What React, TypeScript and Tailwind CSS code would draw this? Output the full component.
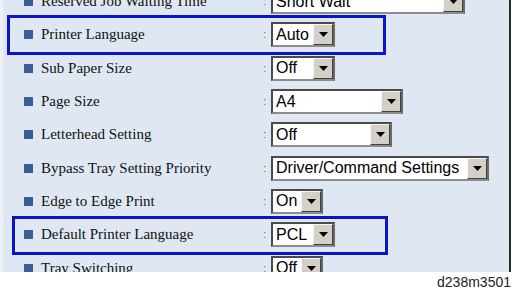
const rows = [
  { label: "Reserved Job Waiting Time", value: "Short Wait", width: 194 },
  { label: "Printer Language", value: "Auto", width: 64 },
  { label: "Sub Paper Size", value: "Off", width: 64 },
  { label: "Page Size", value: "A4", width: 132 },
  { label: "Letterhead Setting", value: "Off", width: 121 },
  { label: "Bypass Tray Setting Priority", value: "Driver/Command Settings", width: 218 },
  { label: "Edge to Edge Print", value: "On", width: 52 },
  { label: "Default Printer Language", value: "PCL", width: 64 },
  { label: "Tray Switching", value: "Off", width: 52 },
];

function Select({ value, width }: { value: string; width: number }) {
  return (
    <div
      className="flex h-[25px] items-center border-2 border-t-[#4a4a4a] border-l-[#4a4a4a] border-b-[#8c8c8c] border-r-[#6a6a6a] bg-white"
      style={{ width }}
    >
      <span className="flex-1 truncate pl-[3px] font-['Liberation_Sans',Arial,sans-serif] text-[16px] leading-none text-black">
        {value}
      </span>
      <span className="flex h-[21px] w-[20px] items-center justify-center border border-t-[#f4f4f4] border-l-[#f4f4f4] border-b-[#404040] border-r-[#404040] bg-[#d4d0c8]">
        <svg width="9" height="5" viewBox="0 0 9 5">
          <path d="M0 0h9L4.5 5z" fill="#000" />
        </svg>
      </span>
    </div>
  );
}

export default function App() {
  return (
    <div className="h-[291px] w-[512px] overflow-hidden bg-white">
      <div className="relative h-[272px] w-[511px] overflow-hidden border-l-[3px] border-r-2 border-l-[#eef2f7] border-r-[#2a2a2a] bg-[#dfe8f2]">
        <div className="-mt-[15px]">
          {rows.map((row) => (
            <div key={row.label} className="flex h-[33.3px] items-center">
              <span className="ml-[21px] h-[9px] w-[9px] bg-[#3b5d93]" />
              <span className="ml-[8px] w-[222px] font-['Liberation_Serif','Times_New_Roman',serif] text-[15px] leading-none text-[#111]">
                {row.label}
              </span>
              <span className="w-[8px] font-['Liberation_Sans',Arial,sans-serif] text-[11px] leading-none text-[#666]">
                :
              </span>
              <Select value={row.value} width={row.width} />
            </div>
          ))}
        </div>

        <div className="absolute left-[4px] top-[15px] h-[40px] w-[379px] border-[3px] border-[#0c14c8]" />
        <div className="absolute left-[9px] top-[216px] h-[39px] w-[376px] border-[3px] border-[#0c14c8]" />
      </div>
      <div className="flex h-[19px] items-end justify-end pr-[1px]">
        <span className="font-['Liberation_Sans',Arial,sans-serif] text-[14px] leading-[17px] text-[#222]">
          d238m3501
        </span>
      </div>
    </div>
  );
}
